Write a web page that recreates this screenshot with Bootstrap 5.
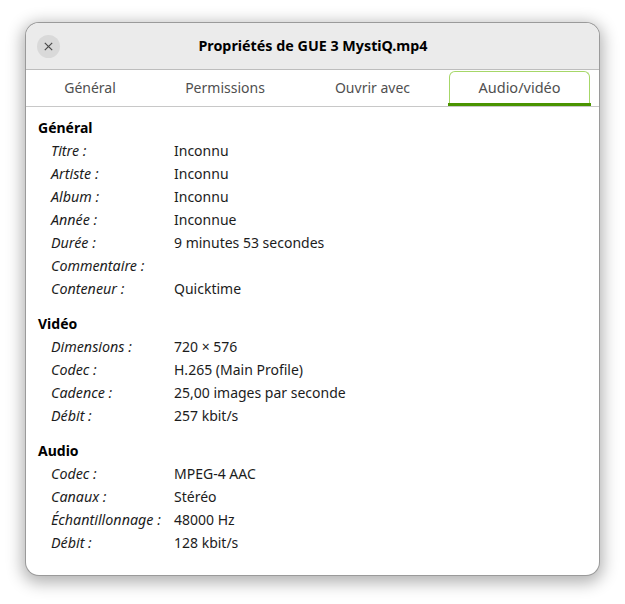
<!DOCTYPE html>
<html lang="fr">
<head>
    <meta charset="UTF-8">
    <meta name="viewport" content="width=device-width, initial-scale=1.0">
    <title>Propriétés</title>
    <link href="https://cdn.jsdelivr.net/npm/bootstrap@5.3.0/dist/css/bootstrap.min.css" rel="stylesheet">
    <style>
        body {
            font-family: "Noto Sans", "Liberation Sans", sans-serif;
            font-size: 14px;
            background-color: #fff;
            color: #1c1c1c;
            padding: 23px 26px 29px;
        }

        .props-window {
            height: 552px;
            border-radius: 13px;
            background: #fff;
            box-shadow: 0 0 0 1px #9a9a9a, 0 4px 16px 4px rgba(0, 0, 0, .3);
            overflow: hidden;
        }

        .props-header {
            height: 47px;
            background: #ebebeb;
            border-bottom: 1px solid #bdbdbd;
            padding: 0 11px;
        }

        .props-title {
            font-size: 14.3px;
            font-weight: 700;
            color: #000;
            margin-right: 22px;
        }

        .close-round {
            width: 23px;
            height: 23px;
            border-radius: 50%;
            background: #d9d9d9;
        }

        .tab-bar {
            height: 37px;
            border-bottom: 1px solid #c8c8c8;
            color: #4f4f4f;
        }

        .tab-item {
            position: relative;
        }

        .tab-1 { width: 122px; margin-left: 3px; }
        .tab-2 { width: 148px; }
        .tab-3 { width: 147px; }
        .tab-4 {
            width: 141px;
            margin: 1px 0 0 3px;
            border: 1px solid #a6d768;
            border-bottom: 0;
            border-radius: 6px 6px 0 0;
            font-size: 14.5px;
            padding-bottom: 3px;
        }

        .tab-1, .tab-2, .tab-3 {
            padding-bottom: 2px;
        }

        .tab-4::after {
            content: "";
            position: absolute;
            left: -2px;
            right: -2px;
            bottom: 0;
            height: 3px;
            background: #4a9400;
        }

        .props-body {
            padding: 9px 12px 0;
        }

        .props-group {
            margin-bottom: 12px;
        }

        .group-name {
            font-weight: 700;
            color: #000;
            line-height: 23px;
        }

        .prop-row {
            line-height: 23px;
            height: 23px;
            padding-left: 13px;
        }

        .prop-key {
            width: 123px;
            font-size: 14.3px;
            font-style: italic;
            white-space: nowrap;
        }
    </style>
</head>
<body>
    <div class="props-window d-flex flex-column">
        <div class="props-header d-flex align-items-center flex-shrink-0">
            <div class="close-round d-flex align-items-center justify-content-center flex-shrink-0">
                <svg width="9" height="9" viewBox="0 0 9 9"><path d="M.8.8l7.4 7.4M8.2.8L.8 8.2" stroke="#4a4a4a" stroke-width="1.2" fill="none"/></svg>
            </div>
            <div class="props-title flex-grow-1 text-center">Propriétés de GUE 3 MystiQ.mp4</div>
        </div>
        <div class="tab-bar d-flex flex-shrink-0">
            <div class="tab-item tab-1 d-flex align-items-center justify-content-center">Général</div>
            <div class="tab-item tab-2 d-flex align-items-center justify-content-center">Permissions</div>
            <div class="tab-item tab-3 d-flex align-items-center justify-content-center">Ouvrir avec</div>
            <div class="tab-item tab-4 d-flex align-items-center justify-content-center">Audio/vidéo</div>
        </div>
        <div class="props-body">
            <div class="props-group">
                <div class="group-name">Général</div>
                <div class="prop-row d-flex"><div class="prop-key">Titre :</div><div>Inconnu</div></div>
                <div class="prop-row d-flex"><div class="prop-key">Artiste :</div><div>Inconnu</div></div>
                <div class="prop-row d-flex"><div class="prop-key">Album :</div><div>Inconnu</div></div>
                <div class="prop-row d-flex"><div class="prop-key">Année :</div><div>Inconnue</div></div>
                <div class="prop-row d-flex"><div class="prop-key">Durée :</div><div>9 minutes 53 secondes</div></div>
                <div class="prop-row d-flex"><div class="prop-key">Commentaire :</div><div></div></div>
                <div class="prop-row d-flex"><div class="prop-key">Conteneur :</div><div>Quicktime</div></div>
            </div>
            <div class="props-group">
                <div class="group-name">Vidéo</div>
                <div class="prop-row d-flex"><div class="prop-key">Dimensions :</div><div>720 × 576</div></div>
                <div class="prop-row d-flex"><div class="prop-key">Codec :</div><div>H.265 (Main Profile)</div></div>
                <div class="prop-row d-flex"><div class="prop-key">Cadence :</div><div>25,00 images par seconde</div></div>
                <div class="prop-row d-flex"><div class="prop-key">Débit :</div><div>257 kbit/s</div></div>
            </div>
            <div class="props-group">
                <div class="group-name">Audio</div>
                <div class="prop-row d-flex"><div class="prop-key">Codec :</div><div>MPEG-4 AAC</div></div>
                <div class="prop-row d-flex"><div class="prop-key">Canaux :</div><div>Stéréo</div></div>
                <div class="prop-row d-flex"><div class="prop-key">Échantillonnage :</div><div>48000 Hz</div></div>
                <div class="prop-row d-flex"><div class="prop-key">Débit :</div><div>128 kbit/s</div></div>
            </div>
        </div>
    </div>
    <script src="https://cdn.jsdelivr.net/npm/bootstrap@5.3.0/dist/js/bootstrap.bundle.min.js"></script>
</body>
</html>
